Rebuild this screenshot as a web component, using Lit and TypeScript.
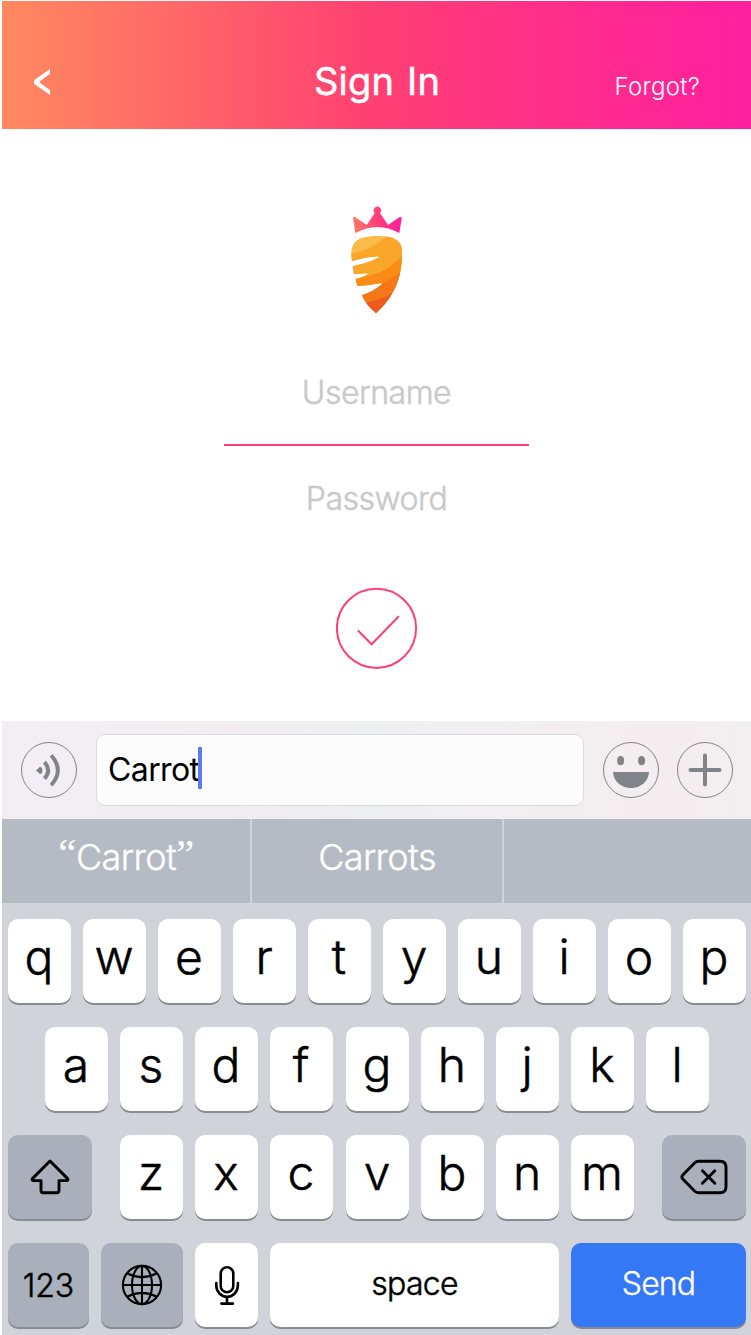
import { LitElement, html, css, svg } from "lit";
import { customElement, property } from "lit/decorators.js";

const shiftIcon = html`<svg width="40" height="36" viewBox="0 0 40 36" fill="none" stroke="#000" stroke-width="2.9" stroke-linejoin="round">
  <path d="M20 2 L2.4 19.6 Q1.6 21.3 3.2 21.6 H11 V31.5 Q11 33.7 13.2 33.7 H26.8 Q29 33.7 29 31.5 V21.6 H36.8 Q38.4 21.3 37.6 19.6 Z" />
</svg>`;

const deleteIcon = html`<svg width="48" height="36" viewBox="0 0 48 36" fill="none" stroke="#000" stroke-width="2.9" stroke-linejoin="round" stroke-linecap="round">
  <path d="M18.5 2.3 H40 Q46 2.3 46 8.3 V27.7 Q46 33.7 40 33.7 H18.5 Q16.3 33.7 14.8 32.3 L2.8 20 Q1 18 2.8 16 L14.8 3.7 Q16.3 2.3 18.5 2.3 Z" />
  <path d="M22.4 11.7 L34.8 24.3 M34.8 11.7 L22.4 24.3" />
</svg>`;

const globeIcon = html`<svg width="42" height="42" viewBox="0 0 42 42" fill="none" stroke="#000" stroke-width="2.1">
  <circle cx="21" cy="21" r="19.1" />
  <ellipse cx="21" cy="21" rx="10" ry="19.1" />
  <path d="M21 1.8 V40.2 M1.8 21 H40.2 M6 9.3 Q21 17 36 9.3 M6 32.7 Q21 25 36 32.7" />
</svg>`;

const micIcon = html`<svg width="26" height="42" viewBox="0 0 26 42" fill="none" stroke="#000" stroke-width="2.6" stroke-linecap="round">
  <rect x="6.7" y="3.2" width="12.6" height="25" rx="6.3" />
  <path d="M2.3 19 V21.5 A10.8 11.3 0 0 0 23.9 21.5 V19 M13 33 V39 M7.4 39.6 H18.9" />
</svg>`;

@customElement("key-cap")
class KeyCap extends LitElement {
  @property() label = "";
  @property() kind = "letter";

  static styles = css`
    :host {
      display: block;
      flex: none;
      width: 63px;
    }
    :host([split]) {
      margin-left: 1px;
    }
    :host([kind="side"]) {
      width: 84px;
    }
    :host([kind="num"]) {
      width: 81px;
    }
    :host([kind="globe"]) {
      width: 82px;
    }
    :host([kind="space"]) {
      width: 289px;
    }
    :host([kind="send"]) {
      width: 175px;
    }
    .cap {
      display: flex;
      justify-content: center;
      height: 84px;
      border-radius: 10px;
      background: #fff;
      box-shadow: 0 2px 0 #888b8f;
      color: #000;
    }
    .letter {
      font-size: 48px;
      font-weight: 300;
      line-height: 75px;
      padding-right: 1px;
      -webkit-text-stroke: 0.5px currentColor;
    }
    .side,
    .globe {
      background: #a9afbb;
    }
    .side,
    .globe,
    .mic {
      align-items: center;
    }
    .num,
    .space,
    .send {
      font-size: 32px;
      font-weight: 300;
      line-height: 82px;
      -webkit-text-stroke: 0.5px currentColor;
    }
    .num {
      background: #a9afbb;
      line-height: 86px;
      letter-spacing: -0.1px;
    }
    .space {
      letter-spacing: -0.7px;
    }
    .send {
      background: #3478f6;
      color: #fff;
      letter-spacing: -0.9px;
      -webkit-text-stroke-width: 0.35px;
    }
  `;

  render() {
    return html`<div class="cap ${this.kind}">${this.label}<slot></slot></div>`;
  }
}

@customElement("carrot-logo")
class CarrotLogo extends LitElement {
  static styles = css`
    :host {
      display: block;
      height: 130px;
      padding-left: 2px;
    }
    svg {
      display: block;
    }
  `;

  render() {
    return html`<svg width="95" height="130" viewBox="0 0 285 390">
      <defs>
        <linearGradient id="crown" x1="0" x2="1" y1="0" y2="0">
          <stop offset="0" stop-color="#ff7a66" />
          <stop offset="0.5" stop-color="#ff3f78" />
          <stop offset="1" stop-color="#ff1f9f" />
        </linearGradient>
        <clipPath id="root">
          <path d="M66 198 C58 150 72 123 141 123 C190 123 216 135 216 168 C217 245 194 305 138 354 Q110 333 96 301 C118 294 140 282 157 267 Q154 263 149 265 C125 270 105 272 82 273 L77 252 C93 250 106 243 116 235 C102 234 87 237 72 238 L68 213 C96 208 126 199 149 185 C120 183 93 192 66 198 Z" />
        </clipPath>
      </defs>
      <path fill="url(#crown)" d="M69 69 Q70 63 76 67 L110 90 L134 54 A11 11 0 1 1 150 54 L174 90 L208 67 Q216 63 215 72 L208 114 Q142 78 76 114 Z" />
      <g clip-path="url(#root)">
        <rect x="55" y="115" width="170" height="245" fill="#f9bb4a" />
        ${svg`<path fill="#f9a629" d="M55 178 Q130 166 172 120 H230 V370 H55 Z" />
        <path fill="#f98c15" d="M55 250 Q165 247 220 178 V370 H55 Z" />
        <path fill="#f57818" d="M55 288 Q155 282 220 224 V370 H55 Z" />
        <path fill="#ea5b1d" d="M95 324 Q155 319 210 282 V370 H95 Z" />`}
      </g>
    </svg>`;
  }
}

@customElement("app-root")
class AppRoot extends LitElement {
  static styles = css`
    :host {
      display: block;
      width: 751px;
      height: 1335px;
      overflow: hidden;
      box-sizing: border-box;
      padding: 1px 0 0 2px;
      background: #fff;
      font-family: Inter, "Liberation Sans", sans-serif;
    }
    svg {
      display: block;
    }
    .header {
      display: grid;
      grid-template-columns: 200px 350px 1fr;
      align-items: baseline;
      box-sizing: border-box;
      height: 128px;
      padding: 50px 51px 0 32px;
      background: linear-gradient(90deg, #ff8960 0%, #ff6568 25%, #ff4072 49%, #ff2f89 72%, #ff1f9f 100%);
      color: #fff;
    }
    .back {
      display: inline-block;
    }
    .title {
      font-size: 38px;
      font-weight: 400;
      line-height: 60px;
      text-align: center;
      letter-spacing: 0.2px;
      word-spacing: 2px;
      padding-right: 63px;
      margin-left: -1px;
      -webkit-text-stroke: 0.5px currentColor;
    }
    .forgot {
      font-size: 24px;
      font-weight: 300;
      letter-spacing: 0.3px;
      text-align: right;
    }
    .form {
      display: flex;
      flex-direction: column;
      align-items: center;
      height: 592px;
      box-sizing: border-box;
      padding-top: 66px;
    }
    .field {
      box-sizing: border-box;
      width: 305px;
      color: #c9c9c9;
      font-size: 32px;
      font-weight: 300;
      letter-spacing: -0.5px;
      text-align: center;
      -webkit-text-stroke: 0.5px currentColor;
    }
    .username {
      margin-top: 41px;
      height: 80px;
      padding-top: 1px;
      line-height: 52px;
      border-bottom: 2px solid #ff3f78;
    }
    .password {
      height: 141px;
      padding-top: 27px;
      line-height: 52px;
    }
    .bar {
      display: flex;
      align-items: center;
      height: 98px;
      box-sizing: border-box;
      padding: 0 18px 0 19px;
      background: linear-gradient(90deg, #f2eef4 0%, #f1edf1 30%, #eeeff1 48%, #f1eff1 65%, #f4edef 90%, #f2eff1 100%);
    }
    .input {
      display: flex;
      align-items: center;
      box-sizing: border-box;
      width: 488px;
      height: 72px;
      margin: 0 19px;
      padding-left: 11px;
      border: 1px solid #dadbdd;
      border-radius: 9px;
      background: #fcfcfc;
      color: #000;
      font-size: 32px;
      font-weight: 400;
      letter-spacing: -0.6px;
      line-height: 70px;
    }
    .caret {
      width: 4px;
      height: 42px;
      margin: 0 0 4px -1px;
      border-radius: 1px;
      background: #5d7cea;
    }
    .plus {
      margin-left: 18px;
    }
    .suggestions {
      display: grid;
      grid-template-columns: 248px 250px 1fr;
      gap: 2px;
      height: 84px;
      background: #d0d3da;
      color: #fff;
      font-size: 36px;
      font-weight: 300;
      letter-spacing: -0.6px;
      line-height: 77px;
      text-align: center;
      -webkit-text-stroke: 0.4px currentColor;
    }
    .suggestion {
      background: #b4bbc5;
    }
    .quote {
      font-family: "Liberation Serif", serif;
      font-size: 41px;
      line-height: 1;
      vertical-align: 3px;
      -webkit-text-stroke: 0;
    }
    .keyboard {
      display: flex;
      flex-direction: column;
      gap: 24px;
      height: 432px;
      box-sizing: border-box;
      padding: 16px 5px 0 6px;
      background: #d0d3da;
    }
    .row {
      display: flex;
      gap: 12px;
    }
    .middle {
      padding-left: 37px;
    }
    .inner {
      display: flex;
      gap: 12px;
      margin: 0 16px;
    }
  `;

  private letters(chars: string, split = "") {
    return [...chars].map(
      (c) => html`<key-cap kind="letter" label=${c} ?split=${c === split}></key-cap>`
    );
  }

  render() {
    return html`
      <div class="header">
        <svg class="back" width="17" height="26" viewBox="0 0 17 26">
          <path fill="#fff" d="M16 0 V4.8 L5 13 L16 21.2 V26 L0 14.8 V11.2 Z" />
        </svg>
        <div class="title">Sign In</div>
        <div class="forgot">Forgot?</div>
      </div>
      <div class="form">
        <carrot-logo></carrot-logo>
        <div class="field username">Username</div>
        <div class="field password">Password</div>
        <svg width="82" height="82" viewBox="0 0 82 82" fill="none" stroke="#ff3f78" stroke-width="2">
          <circle cx="40.5" cy="41.3" r="39.6" />
          <path d="M22.5 44 L35.6 57.3 L62.4 29.8" stroke-linecap="round" />
        </svg>
      </div>
      <div class="bar">
        <svg width="56" height="56" viewBox="0 0 56 56" fill="none" stroke="#808488">
          <circle cx="28" cy="28" r="27.5" stroke-width="1" />
          <path fill="#808488" stroke="none" d="M15 28.4 L19 24.8 Q21.4 25.2 21.4 28.4 Q21.4 31.6 19 32 Z" />
          <path stroke-width="3.9" d="M23.4 20.2 Q31 28.4 23.4 36.6 M30.2 13.2 Q43.5 28.4 30.2 43.2" />
        </svg>
        <div class="input"><span>Carrot</span><span class="caret"></span></div>
        <svg width="56" height="56" viewBox="0 0 56 56">
          <circle cx="28" cy="28" r="27.5" fill="none" stroke="#808488" />
          <g fill="#808488">
            <ellipse cx="17.6" cy="18.6" rx="3.5" ry="4.6" />
            <ellipse cx="38.6" cy="18.6" rx="3.5" ry="4.6" />
            <path d="M10 30 H46 C45.5 40 37 46 28 46 S10.5 40 10 30 Z" />
          </g>
        </svg>
        <svg class="plus" width="56" height="56" viewBox="0 0 56 56" stroke="#808488">
          <circle cx="28" cy="28" r="27.5" fill="none" />
          <path d="M28 13.5 V42.5 M13.5 28 H42.5" stroke-width="4" stroke-linecap="round" />
        </svg>
      </div>
      <div class="suggestions">
        <div class="suggestion"><span class="quote">“</span>Carrot<span class="quote">”</span></div>
        <div class="suggestion">Carrots</div>
        <div class="suggestion"></div>
      </div>
      <div class="keyboard">
        <div class="row">${this.letters("qwertyuiop")}</div>
        <div class="row middle">${this.letters("asdfghjkl", "g")}</div>
        <div class="row">
          <key-cap kind="side">${shiftIcon}</key-cap>
          <div class="inner">${this.letters("zxcvbnm", "v")}</div>
          <key-cap kind="side">${deleteIcon}</key-cap>
        </div>
        <div class="row">
          <key-cap kind="num" label="123"></key-cap>
          <key-cap kind="globe">${globeIcon}</key-cap>
          <key-cap kind="mic">${micIcon}</key-cap>
          <key-cap kind="space" label="space"></key-cap>
          <key-cap kind="send" label="Send"></key-cap>
        </div>
      </div>
    `;
  }
}
